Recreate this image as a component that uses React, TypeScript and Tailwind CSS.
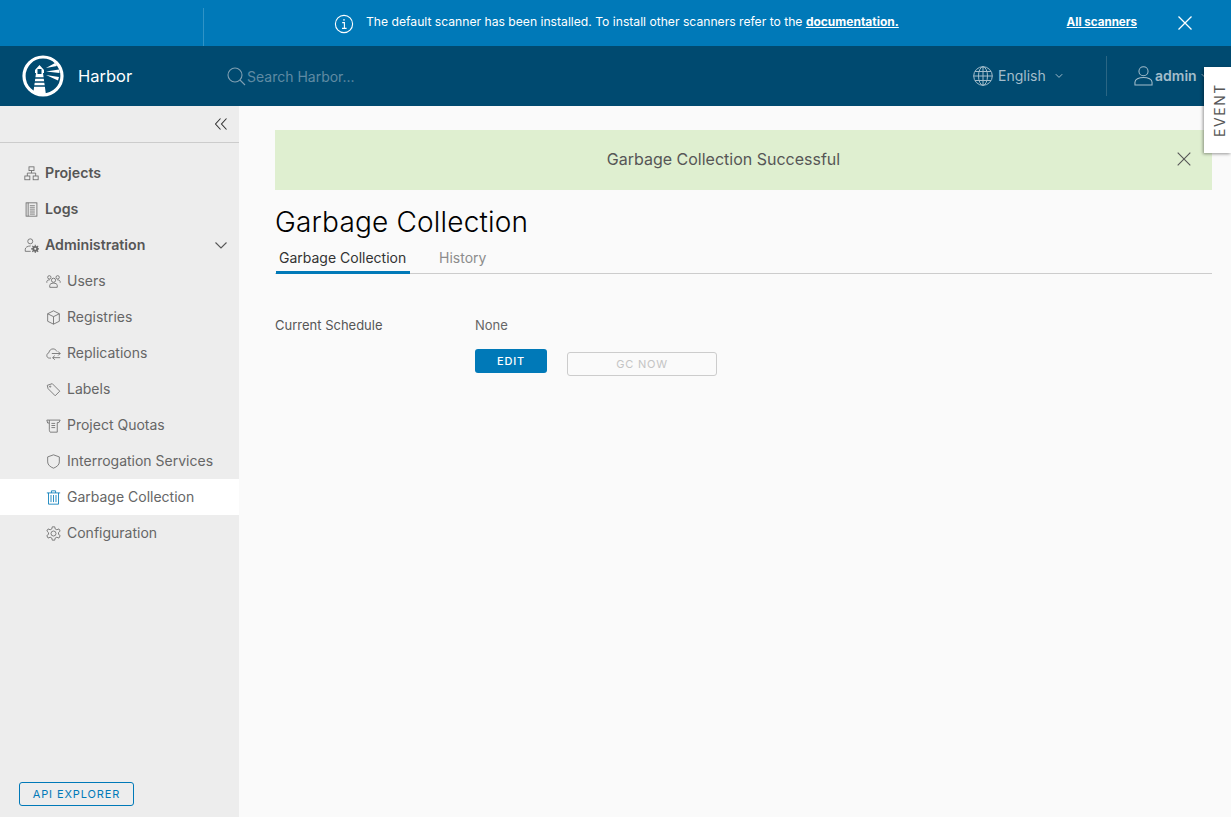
import React from "react";

const S = ({ children, size = 16, cls = "" }: { children: React.ReactNode; size?: number; cls?: string }) => (
  <svg width={size} height={size} viewBox="0 0 36 36" fill="none" stroke="currentColor" strokeWidth={2} className={`shrink-0 ${cls}`}>
    {children}
  </svg>
);

const icons: Record<string, React.ReactNode> = {
  projects: (<><rect x="12" y="2" width="12" height="9" /><rect x="2" y="24" width="12" height="9" /><rect x="22" y="24" width="12" height="9" /><path d="M18 11v6M8 24v-7h20v7" /></>),
  logs: (<><rect x="5" y="2" width="26" height="32" /><path d="M10 2v32" /><path d="M14 9h12M14 14h12M14 19h12M14 24h12M14 29h12" /></>),
  admin: (<><circle cx="15" cy="8" r="6" /><path d="M3 32v-5c0-4 5-8 13-8" /><path d="M3 32h13" /><circle cx="27" cy="26" r="7" fill="currentColor" stroke="none" /><path d="M27 16v20M17 26h20M20 19l14 14M34 19 20 33" strokeWidth="2.600" /><circle cx="27" cy="26" r="2.500" fill="#ededed" stroke="none" /></>),
  users: (<><circle cx="18" cy="15" r="5" /><path d="M9 32v-5c0-3 4-5 9-5s9 2 9 5v5z" /><circle cx="8" cy="8" r="4" /><circle cx="28" cy="8" r="4" /><path d="M2 21v-3c0-2 3-4 7-4M34 21v-3c0-2-3-4-7-4" /></>),
  registries: (<><path d="M18 2 32 9v18l-14 7-14-7V9z" /><path d="M4 9l14 7 14-7M18 16v18" /></>),
  replications: (<><path d="M12 29H8c-4 0-6-3-6-6 0-3 2-6 5-7 1-6 5-9 10-9 4 0 7 2 9 6" /><path d="M14 18h20M29 13l5 5-5 5" /><path d="M34 28H16M21 23l-5 5 5 5" /></>),
  labels: (<><path d="M3 8 15 4l18 18-11 11L5 16z" /><circle cx="10" cy="11" r="1.500" /></>),
  quotas: (<><path d="M8 5h26l-3 6h-4v23H10c-2-2-2-5-2-7V5z" /><path d="M8 5H2l2 7h4" /><path d="M13 13h9M13 18h9M13 23h9" /></>),
  shield: (<path d="M18 2 4 7v12c0 7 6 12 14 15 8-3 14-8 14-15V7z" />),
  trash: (<><path d="M2 7h32M13 7V2h10v5M6 7v27h24V7" /><path d="M12 12v17M18 12v17M24 12v17" /></>),
  gear: (<><circle cx="18" cy="18" r="6" /><path d="M15 2h6l1 5 4 2 5-2 3 5-4 4v4l4 3-3 6-5-2-4 2-1 5h-6l-1-5-4-2-5 2-3-6 4-3v-4l-4-4 3-5 5 2 4-2z" /></>),
};

const Item = ({ icon, label, child, active, bold }: { icon: string; label: string; child?: boolean; active?: boolean; bold?: boolean }) => (
  <div className={`h-9 flex items-center gap-[6px] ${child ? "pl-[46px]" : "pl-6"} ${active ? "bg-white" : ""}`}>
    <S size={15} cls={active ? "text-[#0079b8]" : "text-[#6a6a6a]"}>{icons[icon]}</S>
    <span className={`leading-5 ${bold ? "text-[14.2px] font-semibold text-[#565656]" : "text-[14px] text-[#666]"}`}>{label}</span>
    {label === "Administration" && (
      <svg width="14" height="14" viewBox="0 0 14 14" fill="none" stroke="#565656" strokeWidth="1.1" className="ml-auto mr-[11px]"><path d="M1.5 4.5 7 10l5.5-5.5" /></svg>
    )}
  </div>
);

export default function App() {
  return (
    <div className="relative h-[817px] w-[1231px] overflow-hidden flex flex-col bg-[#fafafa] font-['Inter','Noto_Sans',sans-serif]">
      {/* Banner */}
      <div className="h-[46px] shrink-0 bg-[#0079b8] flex items-center text-white relative">
        <div className="w-[204px] self-stretch shrink-0 pt-2">
          <div className="h-full w-full border-r border-[#2f93c6]" />
        </div>
        <div className="flex-1 flex items-center pl-[130px]">
          <svg width="20" height="20" viewBox="0 0 20 20" fill="none" stroke="white" strokeWidth="1.1" className="shrink-0 mt-0.5">
            <circle cx="10" cy="10" r="8.6" />
            <path d="M8.2 8.6h2.2v5.6M8 14.4h4.600" />
            <circle cx="10" cy="5.900" r="0.8" fill="white" stroke="none" />
          </svg>
          <span className="ml-[12px] text-[12.15px] whitespace-nowrap pb-[2px]">
            The default scanner has been installed. To install other scanners refer to the <span className="text-[12px] font-bold underline">documentation.</span>
          </span>
        </div>
        <span className="text-[11.6px] font-bold underline whitespace-nowrap mr-[40px]">All scanners</span>
        <svg width="16" height="16" viewBox="0 0 16 16" fill="none" stroke="white" strokeWidth="1.3" className="mr-[38px]"><path d="M1.500 1.500l13 13M14.500 1.500l-13 13" /></svg>
      </div>

      {/* Header */}
      <div className="h-[60px] shrink-0 bg-[#004a70] flex items-center relative">
        <svg width="42" height="42" viewBox="0 0 42 42" className="ml-[22px] shrink-0">
          <defs>
            <clipPath id="ring"><circle cx="21" cy="21" r="19" /></clipPath>
          </defs>
          <g clipPath="url(#ring)">
            <path d="M11 40l3-22h-1v-3l4.500-5 4.500 5v3h-1l3 22z" fill="white" />
            <rect x="15.500" y="14" width="4" height="5" fill="#004a70" />
            <path d="M12.500 23h11M12 27h12M11.500 31h13" stroke="#004a70" strokeWidth="1.300" />
          </g>
          <circle cx="21" cy="21" r="19" fill="none" stroke="white" strokeWidth="3.200" />
          <path d="M24 13l9-5 2 3zM24 16.500l13-2 .5 3.500zM24 20l13 2-1 3.500z" fill="white" />
        </svg>
        <span className="ml-[14px] text-white text-[16.5px] w-[149px]">Harbor</span>
        <svg width="19" height="19" viewBox="0 0 19 19" fill="none" stroke="#7f9fb2" strokeWidth="1.1" className="shrink-0"><circle cx="8" cy="8" r="7" /><path d="M13 13l5 5" /></svg>
        <span className="text-[14px] text-[#5f8aa3] ml-px">Search Harbor...</span>
        <div className="ml-auto flex items-center h-10">
          <svg width="20" height="20" viewBox="0 0 20 20" fill="none" stroke="#a3bdcb" strokeWidth="1"><circle cx="10" cy="10" r="9.300" /><ellipse cx="10" cy="10" rx="4.500" ry="9.300" /><path d="M10 .7v18.600M.7 10h18.600M2 5.500h16M2 14.500h16" /></svg>
          <span className="ml-[5px] text-[14px] text-[#a3bdcb] w-[47px] whitespace-nowrap pb-[2px]">English</span>
          <svg width="8" height="6" viewBox="0 0 8 6" fill="none" stroke="#a3bdcb" strokeWidth="1" className="ml-[10px]"><path d="M.8 1.200 4 4.400l3.200-3.200" /></svg>
          <div className="ml-[43px] h-10 w-px bg-[#2b6684]" />
          <svg width="19" height="22" viewBox="0 0 20 22" fill="none" stroke="#a3bdcb" strokeWidth="1.1" className="ml-[27px]"><circle cx="10" cy="6" r="4.800" /><path d="M1 20.500v-3c0-3 4-5 9-5s9 2 9 5v3z" /></svg>
          <span className="ml-[2px] text-[14px] font-semibold text-[#a3bdcb] w-[41px] whitespace-nowrap pb-[2px]">admin</span>
          <svg width="8" height="6" viewBox="0 0 8 6" fill="none" stroke="#a3bdcb" strokeWidth="1" className="ml-[5px] mr-[22px]"><path d="M.8 1.200 4 4.400l3.200-3.200" /></svg>
        </div>
      </div>

      {/* Event tab */}
      <div className="absolute left-[1204px] top-[67px] w-[27px] h-[86px] bg-white shadow-[-1px_1px_3px_rgba(0,0,0,0.4)] flex items-center justify-center z-10">
        <span className="[writing-mode:vertical-rl] rotate-180 text-[14px] tracking-[1.6px] text-[#565656] ml-[3px]">EVENT</span>
      </div>

      <div className="flex-1 flex min-h-0">
        {/* Sidebar */}
        <div className="w-[239px] shrink-0 bg-[#ededed] flex flex-col">
          <div className="h-[37px] shrink-0 border-b border-[#cccccc] flex items-center justify-end pr-[12px]">
            <svg width="12" height="12" viewBox="0 0 12 12" fill="none" stroke="#333" strokeWidth="1.1"><path d="M5.500.5l-5 5.500 5 5.500M11.500.5l-5 5.500 5 5.500" /></svg>
          </div>
          <div className="pt-[12px]">
            <Item icon="projects" label="Projects" bold />
            <Item icon="logs" label="Logs" bold />
            <Item icon="admin" label="Administration" bold />
            <Item icon="users" label="Users" child />
            <Item icon="registries" label="Registries" child />
            <Item icon="replications" label="Replications" child />
            <Item icon="labels" label="Labels" child />
            <Item icon="quotas" label="Project Quotas" child />
            <Item icon="shield" label="Interrogation Services" child />
            <Item icon="trash" label="Garbage Collection" child active />
            <Item icon="gear" label="Configuration" child />
          </div>
          <div className="mt-auto pb-[11px] pl-[19px]">
            <div className="w-[115px] h-6 rounded-[3px] border border-[#0079b8] flex items-center justify-center text-[11px] tracking-[0.9px] text-[#0079b8]">API EXPLORER</div>
          </div>
        </div>

        {/* Content */}
        <div className="flex-1 pl-9 pr-[19px] pt-6 min-w-0">
          <div className="h-[60px] bg-[#dfefd0] flex items-center relative">
            <span className="flex-1 text-center text-[16px] text-[#565656] pr-10 pb-[2px]">Garbage Collection Successful</span>
            <svg width="14" height="14" viewBox="0 0 14 14" fill="none" stroke="#565656" strokeWidth="1.1" className="absolute right-[21px] top-[22px]"><path d="M.7.7l12.600 12.600M13.300.7.7 13.300" /></svg>
          </div>
          <h1 className="mt-[14px] text-[28px] leading-9 font-light text-black tracking-[0.18px]">Garbage Collection</h1>
          <div className="mt-[2px] h-[32px] border-b border-[#cccccc] flex items-stretch text-[14px]">
            <div className="ml-px px-[3px] border-b-[3px] border-[#0079b8] -mb-px w-[134px] text-[#333] pt-[5px] whitespace-nowrap">Garbage Collection</div>
            <div className="ml-[29px] pt-[5px] text-[#8c8c8c]">History</div>
          </div>
          <div className="mt-[43px] flex text-[13px]">
            <div className="w-[200px] text-[#565656] leading-4">Current Schedule</div>
            <div>
              <div className="text-[#666] leading-4">None</div>
              <div className="mt-4 flex items-start">
                <div className="w-[72px] h-6 bg-[#0079b8] rounded-[3px] flex items-center justify-center text-white text-[11px] font-medium tracking-[0.8px]">EDIT</div>
                <div className="ml-5 mt-[3px] w-[150px] h-6 rounded-[3px] border border-[#cccccc] flex items-center justify-center text-[#c4c4c4] text-[11px] tracking-[0.8px]">GC NOW</div>
              </div>
            </div>
          </div>
        </div>
      </div>
    </div>
  );
}
